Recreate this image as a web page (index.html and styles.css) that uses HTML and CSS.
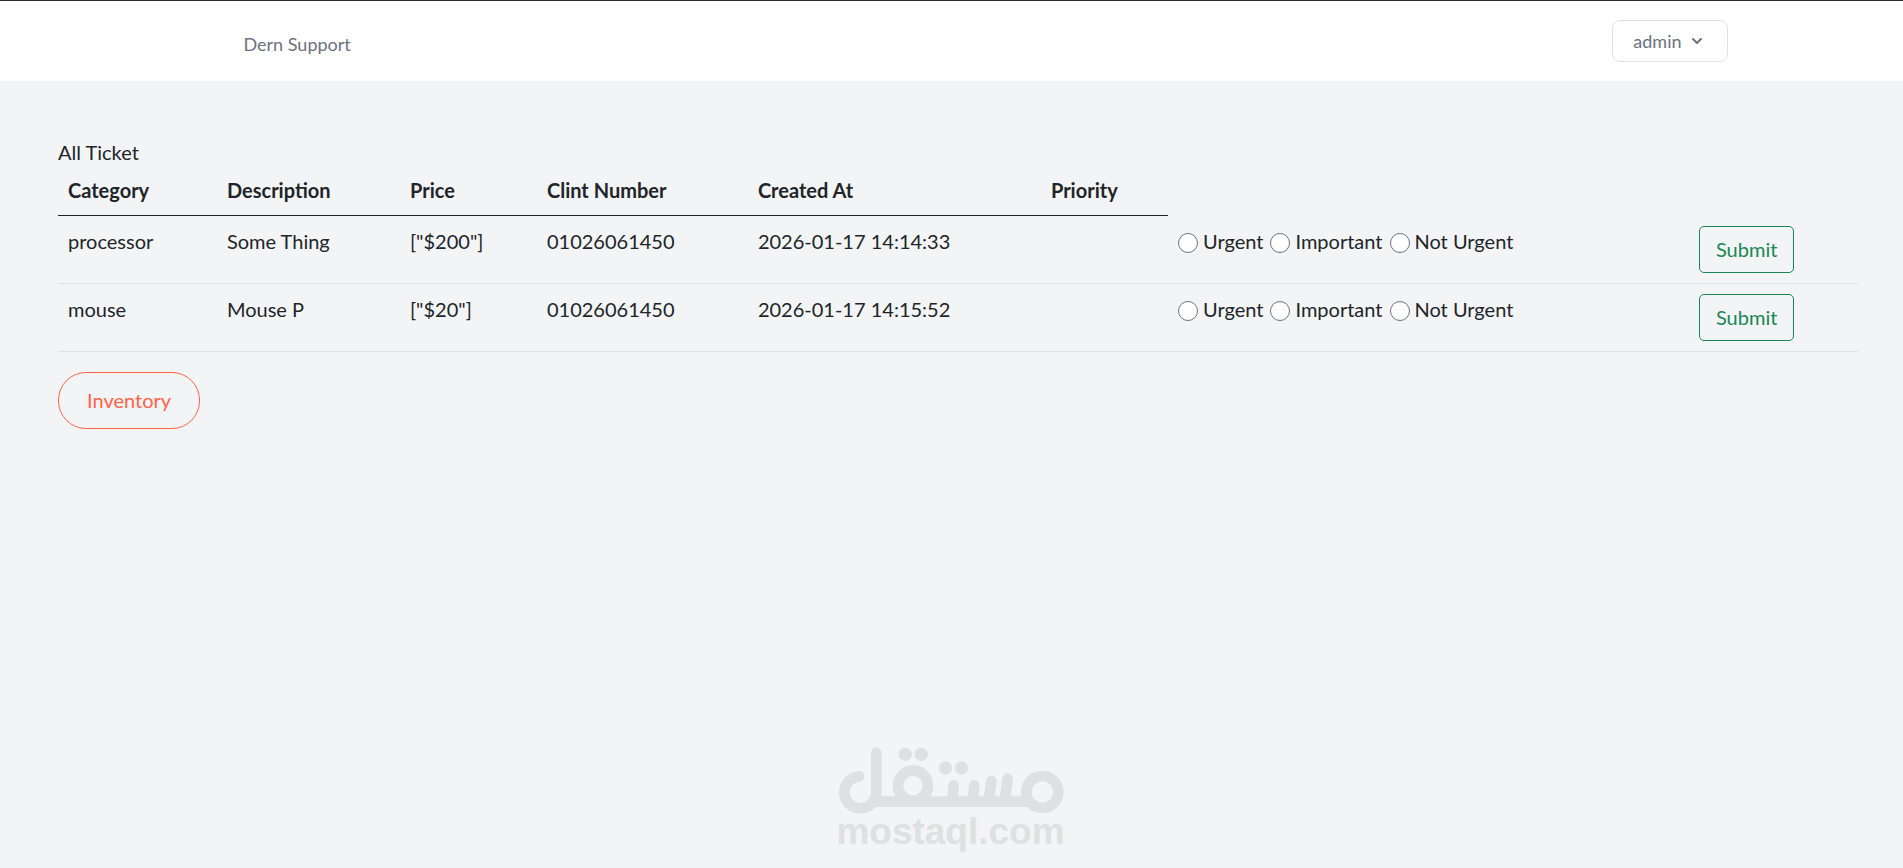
FILE: index.html
```html
<!DOCTYPE html>
<html lang="en">
<head>
<meta charset="utf-8">
<meta name="viewport" content="width=device-width, initial-scale=1">
<title>Dern Support</title>
<link rel="stylesheet" href="styles.css">
</head>
<body>
<nav class="navbar">
  <div class="navbar-inner">
    <a class="brand" href="#">Dern Support</a>
    <button class="user-menu" type="button" aria-haspopup="true">admin
      <svg class="chevron" viewBox="0 0 20 20" fill="currentColor" aria-hidden="true"><path fill-rule="evenodd" d="M5.293 7.293a1 1 0 011.414 0L10 10.586l3.293-3.293a1 1 0 111.414 1.414l-4 4a1 1 0 01-1.414 0l-4-4a1 1 0 010-1.414z" clip-rule="evenodd"/></svg>
    </button>
  </div>
</nav>
<main class="content">
  <h1 class="title">All Ticket</h1>
  <table class="tickets">
    <colgroup>
      <col class="col-category"><col class="col-description"><col class="col-price"><col class="col-number"><col class="col-created"><col class="col-priority"><col class="col-options"><col class="col-action">
    </colgroup>
    <thead>
      <tr><th>Category</th><th>Description</th><th>Price</th><th>Clint Number</th><th>Created At</th><th>Priority</th></tr>
    </thead>
    <tbody>
      <tr>
        <td>processor</td><td>Some Thing</td><td>["$200"]</td><td>01026061450</td><td>2026-01-17 14:14:33</td><td></td>
        <td><div class="options">
          <label class="option"><input type="radio" name="priority-1">Urgent</label>
          <label class="option"><input type="radio" name="priority-1">Important</label>
          <label class="option"><input type="radio" name="priority-1">Not Urgent</label>
        </div></td>
        <td><button class="submit" type="submit">Submit</button></td>
      </tr>
      <tr>
        <td>mouse</td><td>Mouse P</td><td>["$20"]</td><td>01026061450</td><td>2026-01-17 14:15:52</td><td></td>
        <td><div class="options">
          <label class="option"><input type="radio" name="priority-2">Urgent</label>
          <label class="option"><input type="radio" name="priority-2">Important</label>
          <label class="option"><input type="radio" name="priority-2">Not Urgent</label>
        </div></td>
        <td><button class="submit" type="submit">Submit</button></td>
      </tr>
    </tbody>
  </table>
  <a class="inventory" href="#">Inventory</a>
</main>
<div class="watermark">
  <svg class="watermark-logo" viewBox="54 57 678 199" fill="none" stroke="currentColor" stroke-width="32" stroke-linecap="round" role="img" aria-label="مستقل">
    <path d="M118 144A48 48 0 1 0 169 191V73"/>
    <path d="M160 220H632" stroke-linecap="butt"/>
    <circle cx="279" cy="172" r="45"/>
    <circle cx="667" cy="191" r="48"/>
    <path d="M401 171L397 212M463 171L458 212M514 158L507 212M563 151L555 212"/>
    <g fill="currentColor" stroke="none"><circle cx="256" cy="78" r="20"/><circle cx="304" cy="78" r="20"/><circle cx="376" cy="119" r="20"/><circle cx="424" cy="119" r="20"/></g>
  </svg>
  <span class="watermark-text">mostaql.com</span>
</div>
</body>
</html>
```

FILE: styles.css
```css
* { box-sizing: border-box; }
body {
  margin: 0;
  min-height: 100vh;
  background: #f3f4f6;
  color: #212529;
  font: 20px/30px Lato, "Open Sans", sans-serif;
}
a { text-decoration: none; }
button { font: inherit; background: transparent; cursor: pointer; }
.navbar { background: #fff; border-top: 1px solid #2b2a2e; }
.navbar-inner {
  display: flex;
  justify-content: space-between;
  align-items: center;
  max-width: 1552px;
  height: 80px;
  margin: 0 auto;
  padding-left: 68px;
}
.brand, .user-menu { color: #6b7280; font-size: 18px; line-height: 24px; }
.brand { margin-top: 5px; }
.user-menu {
  display: flex;
  align-items: center;
  gap: 5px;
  height: 42px;
  min-width: 115px;
  padding: 0 20px;
  border: 1px solid #dee2e6;
  border-radius: 8px;
  background: #fff;
}
.chevron { width: 20px; height: 20px; }
.content { padding: 56px 45px 0 58px; }
.title { margin: 0; font-size: 20px; font-weight: 400; line-height: 30px; }
.tickets { width: 100%; border-collapse: collapse; table-layout: fixed; }
.col-category { width: 8.83%; }
.col-description { width: 10.17%; }
.col-price { width: 7.61%; }
.col-number { width: 11.72%; }
.col-created { width: 16.28%; }
.col-priority { width: 7.06%; }
.col-options { width: 28.94%; }
.col-action { width: 9.39%; }
th, td { padding: 10px; text-align: left; vertical-align: top; white-space: nowrap; }
th { padding-top: 8px; font-weight: 700; border-bottom: 1px solid #212529; }
tbody tr { border-bottom: 1px solid #dee2e6; }
.options { display: flex; gap: 7px; }
.option { display: flex; align-items: center; gap: 5px; }
.option input {
  appearance: none;
  width: 20px;
  height: 20px;
  margin: 4px 0 0;
  border: 1px solid #6b7280;
  border-radius: 50%;
  background: #fff;
}
.option input:checked { background: radial-gradient(#198754 35%, #fff 40%); }
.submit {
  display: block;
  height: 47px;
  padding: 0 16px;
  border: 1px solid #198754;
  border-radius: 5px;
  color: #198754;
}
.inventory {
  display: inline-block;
  margin-top: 20px;
  padding: 12px 28px 13px;
  border: 1px solid #ff6347;
  border-radius: 28px;
  color: #ff6347;
}
.watermark {
  position: absolute;
  left: 0;
  right: 2px;
  bottom: 15px;
  display: flex;
  flex-direction: column;
  align-items: center;
  color: #dfe0e1;
  pointer-events: none;
}
.watermark-logo { width: 226px; height: 67px; }
.watermark-text { font: bold 37px/36px "Liberation Sans", Arial, sans-serif; padding-bottom: 3px; }
```
